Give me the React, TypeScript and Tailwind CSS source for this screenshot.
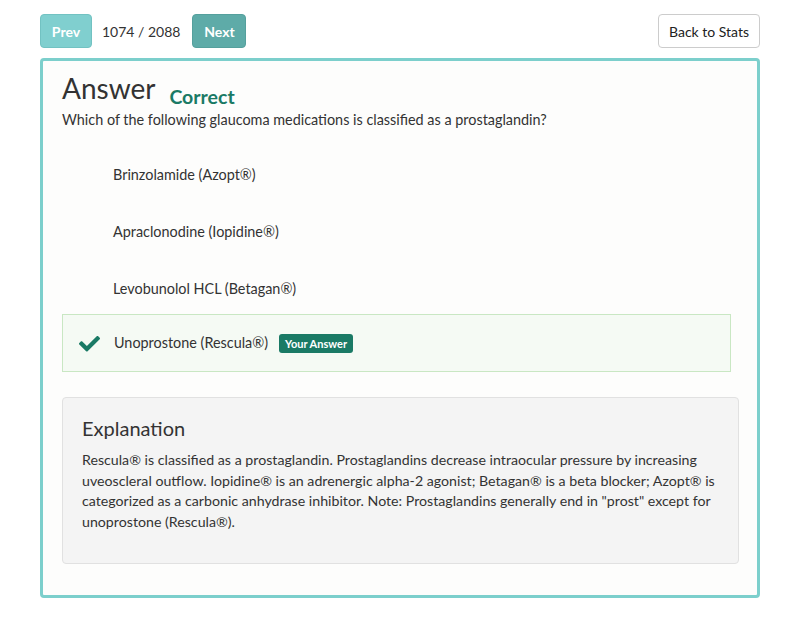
import React from "react";

function Check() {
  return (
    <svg width="21" height="17" viewBox="0 0 512 400" className="shrink-0">
      <path
        fill="#1a7a65"
        d="M173.9 389.4L7.5 223c-10-10-10-26.2 0-36.2l36.2-36.2c10-10 26.2-10 36.2 0L192 262.7 432.1 22.6c10-10 26.2-10 36.2 0l36.2 36.2c10 10 10 26.2 0 36.2L210.1 389.4c-10 10-26.2 10-36.2 0z"
      />
    </svg>
  );
}

export default function App() {
  const options = [
    "Brinzolamide (Azopt®)",
    "Apraclonodine (Iopidine®)",
    "Levobunolol HCL (Betagan®)",
  ];
  return (
    <div
      className="w-[800px] h-[622px] bg-white text-[#333] px-[40px] pt-[14px]"
      style={{ fontFamily: "Lato, 'Open Sans', sans-serif" }}
    >
      <div className="flex items-center h-[34px]">
        <button className="h-[34px] w-[52px] rounded-[4px] bg-[#80cfcf] border border-[#72c2c2] text-white text-[14px] font-bold">
          Prev
        </button>
        <span className="ml-[10px] text-[14px] text-[#333]">1074 / 2088</span>
        <button className="ml-[12px] h-[34px] w-[54px] rounded-[4px] bg-[#5eaba8] border border-[#55a09d] text-white text-[14px] font-bold">
          Next
        </button>
        <div className="flex-1" />
        <button className="h-[34px] w-[102px] rounded-[4px] bg-white border border-[#ccc] text-[#222] text-[14px]">
          Back to Stats
        </button>
      </div>

      <div className="mt-[10px] h-[540px] border-[3px] border-[#7ccfcc] rounded-[4px] bg-[#fdfdfc] px-[19px] pt-[10px]">
        <div className="flex items-end">
          <h1 className="text-[28px] leading-[34px] text-[#333]">Answer</h1>
          <span className="ml-[14px] text-[19.5px] leading-[24px] font-bold text-[#1a7a65] mb-[-4px]">
            Correct
          </span>
        </div>
        <p className="text-[14.4px] leading-[20px] mt-[5px] text-[#333]">
          Which of the following glaucoma medications is classified as a prostaglandin?
        </p>
        <div className="mt-[16px] flex flex-col">
          {options.map((o) => (
            <div key={o} className="h-[57px] pl-[51px] flex items-center text-[14.4px] leading-[20px] text-[#333]">
              {o}
            </div>
          ))}
        </div>
        <div className="w-[669px] h-[58px] mt-[-3px] border border-[#c9e7c3] bg-[#f5faf4] flex items-center pl-[16px]">
          <Check />
          <span className="ml-[14px] text-[14.4px] text-[#333]">Unoprostone (Rescula®)</span>
          <span className="ml-[11px] h-[19px] px-[6px] rounded-[3px] bg-[#1a7a65] text-white text-[11px] font-bold leading-[19px]">
            Your Answer
          </span>
        </div>
        <div className="mt-[25px] w-[677px] h-[167px] bg-[#f4f4f4] border border-[#e1e1e1] rounded-[4px] pl-[19px] pr-[16px] pt-[17px]">
          <h2 className="text-[20px] leading-[26px] text-[#333]">Explanation</h2>
          <p className="mt-[9px] text-[14.2px] leading-[20.7px] text-[#333]">
            Rescula® is classified as a prostaglandin. Prostaglandins decrease intraocular pressure by increasing uveoscleral outflow. Iopidine® is an adrenergic alpha-2 agonist; Betagan® is a beta blocker; Azopt® is categorized as a carbonic anhydrase inhibitor. Note: Prostaglandins generally end in "prost" except for unoprostone (Rescula®).
          </p>
        </div>
      </div>
    </div>
  );
}
